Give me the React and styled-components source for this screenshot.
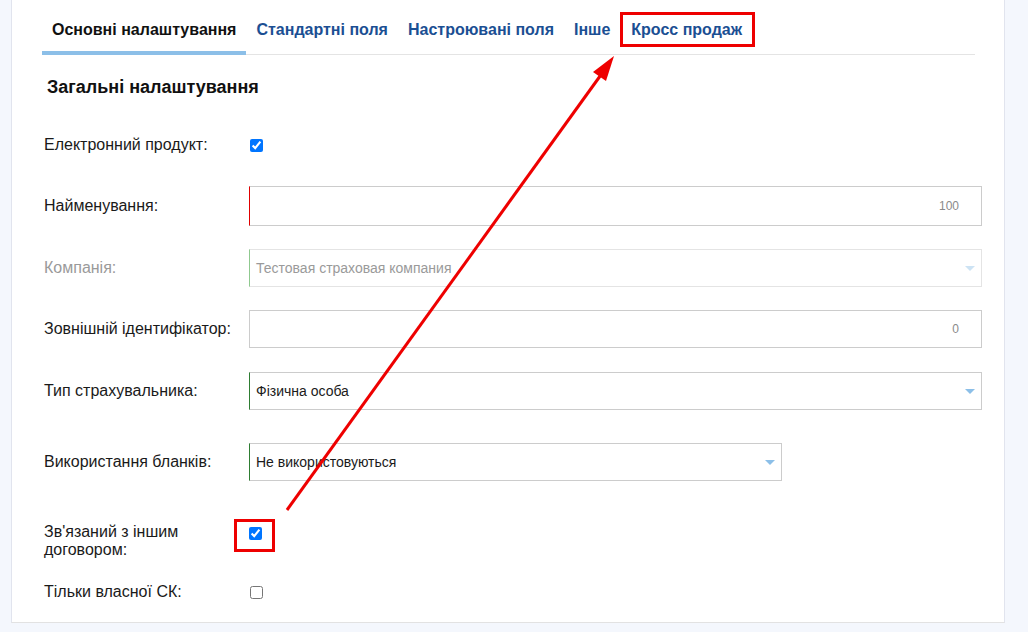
import React from "react";
import styled, { createGlobalStyle } from "styled-components";

const GlobalStyle = createGlobalStyle`
  html, body {
    margin: 0;
    padding: 0;
    background: #f4f7fd;
    font-family: "Liberation Sans", Arial, sans-serif;
  }
`;

const Page = styled.div`
  position: relative;
  width: 1028px;
  height: 632px;
  display: flex;
  background: #f4f7fd;
  overflow: hidden;
`;

const Panel = styled.div`
  margin-left: 11px;
  width: 994px;
  height: 623px;
  background: #fff;
  border-left: 1px solid #e1e4ee;
  border-right: 1px solid #e1e4ee;
  border-bottom: 1px solid #e2e2e2;
  padding: 12px 0 0 30px;
  box-sizing: border-box;
`;

const TabBar = styled.div`
  display: flex;
  width: 933px;
  border-bottom: 1px solid #e4e4e4;
`;

const Tab = styled.div`
  display: flex;
  flex-direction: column;
  margin-bottom: -1px;
  padding-bottom: 4px;
  border-bottom: 4px solid ${(p) => (p.$active ? "#8cbfe8" : "transparent")};
`;

const TabLabel = styled.span`
  display: block;
  padding: 6px ${(p) => (p.$marked ? 10 : 7)}px 6px ${(p) => (p.$marked ? 8 : 7)}px;
  border: 3px solid ${(p) => (p.$marked ? "#ee0000" : "transparent")};
  font-size: 16px;
  line-height: 17px;
  font-weight: bold;
  color: ${(p) => (p.$active ? "#111" : "#1b4f93")};
  white-space: nowrap;
`;

const Heading = styled.h2`
  margin: 22px 0 0 5px;
  font-size: 18px;
  line-height: 21px;
  font-weight: bold;
  color: #111;
`;

const Form = styled.div`
  display: flex;
  flex-direction: column;
  margin-top: 26px;
  padding-left: 2px;
`;

const Row = styled.div`
  display: flex;
  align-items: center;
  min-height: ${(p) => p.$h || 38}px;
  margin-top: ${(p) => p.$gap || 0}px;
`;

const Label = styled.div`
  width: 205px;
  flex: none;
  padding-top: ${(p) => p.$drop || 0}px;
  font-size: 16px;
  line-height: 18px;
  color: ${(p) => (p.$muted ? "#9a9a9a" : "#1a1a1a")};
`;

const Field = styled.div`
  position: relative;
  display: flex;
  align-items: center;
  box-sizing: border-box;
  width: ${(p) => p.$w || 733}px;
  height: ${(p) => p.$h || 38}px;
  border: 1px solid ${(p) => (p.$faint ? "#e4e4e4" : "#cccccc")};
  border-left: 1px solid ${(p) => p.$accent || (p.$faint ? "#e4e4e4" : "#cccccc")};
  padding: 0 30px 0 6px;
  font-size: 14px;
  color: ${(p) => (p.$faint ? "#9a9a9a" : "#1a1a1a")};
  background: #fff;
`;

const Counter = styled.span`
  margin-left: auto;
  margin-right: -8px;
  font-size: 12px;
  color: #8a8a8a;
`;

const Caret = styled.span`
  position: absolute;
  right: 6px;
  top: 50%;
  margin-top: -2px;
  width: 0;
  height: 0;
  border-left: 5px solid transparent;
  border-right: 5px solid transparent;
  border-top: 5px solid ${(p) => (p.$faint ? "#cde3f4" : "#8cbfe8")};
`;

const Check = styled.input.attrs({ type: "checkbox", readOnly: true })`
  width: 13px;
  height: 13px;
  margin: 0 0 0 1px;
  accent-color: #0075ff;
`;

const Mark = styled.span`
  display: inline-flex;
  align-items: center;
  justify-content: center;
  width: 41px;
  height: 33px;
  box-sizing: border-box;
  margin-left: -15px;
  padding-bottom: 4px;
  border: 3px solid #ee0000;
`;

const Overlay = styled.svg`
  position: absolute;
  left: 0;
  top: 0;
  pointer-events: none;
`;

export default function App() {
  return (
    <>
      <GlobalStyle />
      <Page>
        <Panel>
          <TabBar>
            <Tab $active>
              <TabLabel $active>Основні налаштування</TabLabel>
            </Tab>
            <Tab>
              <TabLabel>Стандартні поля</TabLabel>
            </Tab>
            <Tab>
              <TabLabel>Настроювані поля</TabLabel>
            </Tab>
            <Tab>
              <TabLabel>Інше</TabLabel>
            </Tab>
            <Tab>
              <TabLabel $marked>Кросс продаж</TabLabel>
            </Tab>
          </TabBar>

          <Heading>Загальні налаштування</Heading>

          <Form>
            <Row $h={42}>
              <Label>Електронний продукт:</Label>
              <Check checked />
            </Row>
            <Row $h={40} $gap={20}>
              <Label>Найменування:</Label>
              <Field $h={40} $accent="#e00000">
                <Counter>100</Counter>
              </Field>
            </Row>
            <Row $gap={23}>
              <Label $muted>Компанія:</Label>
              <Field $faint $accent="#8fc98f">
                Тестовая страховая компания
                <Caret $faint />
              </Field>
            </Row>
            <Row $gap={23}>
              <Label>Зовнішній ідентифікатор:</Label>
              <Field>
                <Counter>0</Counter>
              </Field>
            </Row>
            <Row $gap={24}>
              <Label>Тип страхувальника:</Label>
              <Field $accent="#2e7d32">
                Фізична особа
                <Caret />
              </Field>
            </Row>
            <Row $gap={33}>
              <Label>Використання бланків:</Label>
              <Field $w={533} $accent="#2e7d32">
                Не використовуються
                <Caret />
              </Field>
            </Row>
            <Row $h={40} $gap={30}>
              <Label $drop={12}>
                Зв'язаний з іншим
                <br />
                договором:
              </Label>
              <Mark>
                <Check checked />
              </Mark>
            </Row>
            <Row $h={30} $gap={18}>
              <Label>Тільки власної СК:</Label>
              <Check />
            </Row>
          </Form>
        </Panel>

        <Overlay width="1028" height="632" viewBox="0 0 1028 632">
          <line x1="287" y1="510" x2="603" y2="72" stroke="#ee0000" strokeWidth="3" />
          <polygon points="614,56 593,72 606,81" fill="#ee0000" />
        </Overlay>
      </Page>
    </>
  );
}
